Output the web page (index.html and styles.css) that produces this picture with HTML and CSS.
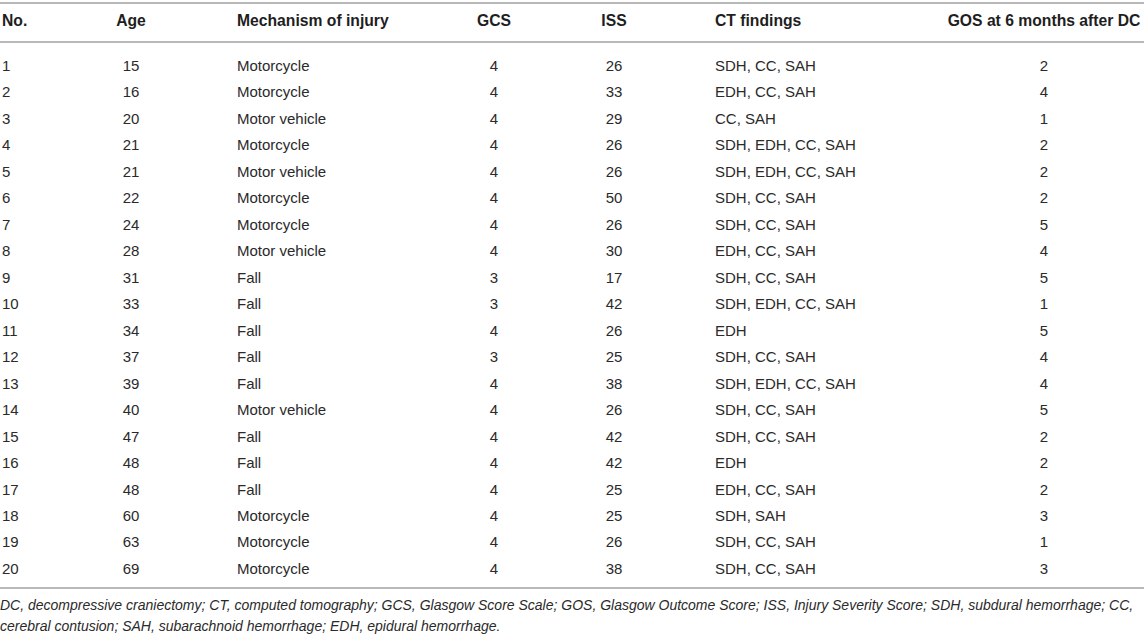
FILE: index.html
```html
<!DOCTYPE html>
<html>
<head>
<meta charset="utf-8">
<link rel="stylesheet" href="styles.css">
</head>
<body>
<div class="page">
<table class="data">
<colgroup>
<col class="c-no"><col class="c-age"><col class="c-mech"><col class="c-gcs"><col class="c-iss"><col class="c-ct"><col class="c-gos">
</colgroup>
<thead>
<tr>
<th class="l no">No.</th>
<th class="c">Age</th>
<th class="l mech">Mechanism of injury</th>
<th class="c">GCS</th>
<th class="c">ISS</th>
<th class="l ct">CT findings</th>
<th class="c">GOS at 6 months after DC</th>
</tr>
</thead>
<tbody>
<tr><td class="l no">1</td><td class="c">15</td><td class="l mech">Motorcycle</td><td class="c">4</td><td class="c">26</td><td class="l ct">SDH, CC, SAH</td><td class="c">2</td></tr>
<tr><td class="l no">2</td><td class="c">16</td><td class="l mech">Motorcycle</td><td class="c">4</td><td class="c">33</td><td class="l ct">EDH, CC, SAH</td><td class="c">4</td></tr>
<tr><td class="l no">3</td><td class="c">20</td><td class="l mech">Motor vehicle</td><td class="c">4</td><td class="c">29</td><td class="l ct">CC, SAH</td><td class="c">1</td></tr>
<tr><td class="l no">4</td><td class="c">21</td><td class="l mech">Motorcycle</td><td class="c">4</td><td class="c">26</td><td class="l ct">SDH, EDH, CC, SAH</td><td class="c">2</td></tr>
<tr><td class="l no">5</td><td class="c">21</td><td class="l mech">Motor vehicle</td><td class="c">4</td><td class="c">26</td><td class="l ct">SDH, EDH, CC, SAH</td><td class="c">2</td></tr>
<tr><td class="l no">6</td><td class="c">22</td><td class="l mech">Motorcycle</td><td class="c">4</td><td class="c">50</td><td class="l ct">SDH, CC, SAH</td><td class="c">2</td></tr>
<tr><td class="l no">7</td><td class="c">24</td><td class="l mech">Motorcycle</td><td class="c">4</td><td class="c">26</td><td class="l ct">SDH, CC, SAH</td><td class="c">5</td></tr>
<tr><td class="l no">8</td><td class="c">28</td><td class="l mech">Motor vehicle</td><td class="c">4</td><td class="c">30</td><td class="l ct">EDH, CC, SAH</td><td class="c">4</td></tr>
<tr><td class="l no">9</td><td class="c">31</td><td class="l mech">Fall</td><td class="c">3</td><td class="c">17</td><td class="l ct">SDH, CC, SAH</td><td class="c">5</td></tr>
<tr><td class="l no">10</td><td class="c">33</td><td class="l mech">Fall</td><td class="c">3</td><td class="c">42</td><td class="l ct">SDH, EDH, CC, SAH</td><td class="c">1</td></tr>
<tr><td class="l no">11</td><td class="c">34</td><td class="l mech">Fall</td><td class="c">4</td><td class="c">26</td><td class="l ct">EDH</td><td class="c">5</td></tr>
<tr><td class="l no">12</td><td class="c">37</td><td class="l mech">Fall</td><td class="c">3</td><td class="c">25</td><td class="l ct">SDH, CC, SAH</td><td class="c">4</td></tr>
<tr><td class="l no">13</td><td class="c">39</td><td class="l mech">Fall</td><td class="c">4</td><td class="c">38</td><td class="l ct">SDH, EDH, CC, SAH</td><td class="c">4</td></tr>
<tr><td class="l no">14</td><td class="c">40</td><td class="l mech">Motor vehicle</td><td class="c">4</td><td class="c">26</td><td class="l ct">SDH, CC, SAH</td><td class="c">5</td></tr>
<tr><td class="l no">15</td><td class="c">47</td><td class="l mech">Fall</td><td class="c">4</td><td class="c">42</td><td class="l ct">SDH, CC, SAH</td><td class="c">2</td></tr>
<tr><td class="l no">16</td><td class="c">48</td><td class="l mech">Fall</td><td class="c">4</td><td class="c">42</td><td class="l ct">EDH</td><td class="c">2</td></tr>
<tr><td class="l no">17</td><td class="c">48</td><td class="l mech">Fall</td><td class="c">4</td><td class="c">25</td><td class="l ct">EDH, CC, SAH</td><td class="c">2</td></tr>
<tr><td class="l no">18</td><td class="c">60</td><td class="l mech">Motorcycle</td><td class="c">4</td><td class="c">25</td><td class="l ct">SDH, SAH</td><td class="c">3</td></tr>
<tr><td class="l no">19</td><td class="c">63</td><td class="l mech">Motorcycle</td><td class="c">4</td><td class="c">26</td><td class="l ct">SDH, CC, SAH</td><td class="c">1</td></tr>
<tr><td class="l no">20</td><td class="c">69</td><td class="l mech">Motorcycle</td><td class="c">4</td><td class="c">38</td><td class="l ct">SDH, CC, SAH</td><td class="c">3</td></tr>
</tbody>
</table>
<p class="note">DC, decompressive craniectomy; CT, computed tomography; GCS, Glasgow Score Scale; GOS, Glasgow Outcome Score; ISS, Injury Severity Score; SDH, subdural hemorrhage; CC, cerebral contusion; SAH, subarachnoid hemorrhage; EDH, epidural hemorrhage.</p>
</div>
</body>
</html>
```

FILE: styles.css
```css
html, body {
  margin: 0;
  padding: 0;
  background: #ffffff;
}
body {
  font-family: "Liberation Sans", Arial, Helvetica, sans-serif;
  color: #2a2a2a;
}
.page {
  width: 1144px;
  padding-top: 2px;
}
.data {
  width: 1144px;
  table-layout: fixed;
  border-collapse: collapse;
  border-top: 2px solid #b8b8b8;
  border-bottom: 2px solid #b8b8b8;
}
.c-no { width: 40px; }
.c-age { width: 182px; }
.c-mech { width: 212px; }
.c-gcs { width: 120px; }
.c-iss { width: 120px; }
.c-ct { width: 270px; }
.c-gos { width: 200px; }

.data th, .data td {
  padding: 0;
  white-space: nowrap;
}
.data th {
  font-size: 15.7px;
  font-weight: bold;
  color: #1e1e1e;
  line-height: 20px;
  padding-top: 7px;
  padding-bottom: 10px;
  border-bottom: 2px solid #b8b8b8;
}
.data td {
  font-size: 15px;
  line-height: 26.47px;
}
.data tbody tr:first-child td {
  padding-top: 10px;
}
.data tbody tr:last-child td {
  padding-bottom: 5px;
}
.l { text-align: left; }
.c { text-align: center; }
.no { padding-left: 2px !important; }
.mech { padding-left: 15px !important; }
.ct { padding-left: 41px !important; }

.note {
  margin: 0;
  padding-top: 6px;
  font-size: 14px;
  font-style: italic;
  line-height: 21px;
  color: #2a2a2a;
}
```
